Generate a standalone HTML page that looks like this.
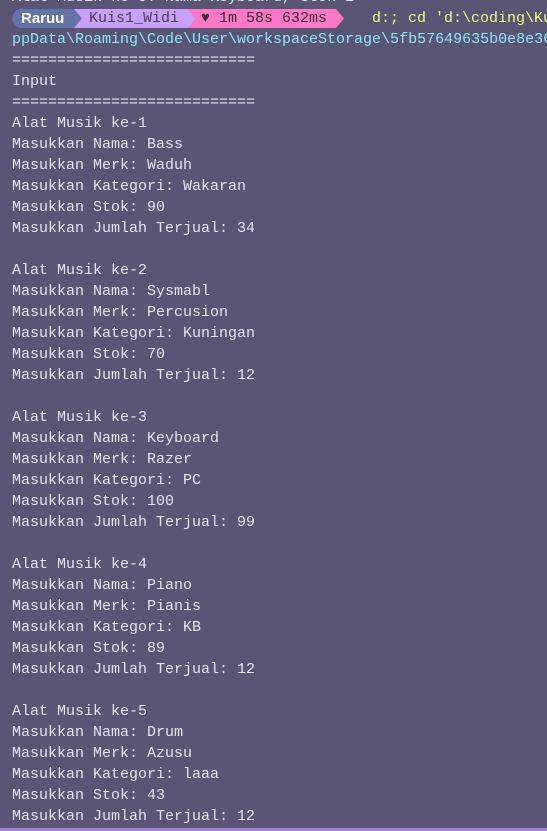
<!DOCTYPE html>
<html><head><meta charset="utf-8"><style>
html,body{margin:0;padding:0;}
body{width:547px;height:831px;background:#5a5475;overflow:hidden;position:relative;font-family:"Liberation Mono","DejaVu Sans Mono",monospace;font-size:15px;color:#e6e3ef;}
.l{position:absolute;left:12px;white-space:pre;line-height:21px;height:21px;}
.bar{position:absolute;left:0;right:0;bottom:0;height:3px;background:#a77fd9;}
.seg{position:absolute;top:9px;height:19px;line-height:19px;white-space:pre;}
</style></head><body>
<div class="l" style="top:-13px">Alat Musik ke-5: Nama=Keyboard, Stok=1</div>
<svg style="position:absolute;left:0;top:9px" width="360" height="19">
<path d="M22 0 H188 L196 9.5 L188 19 H22 A9.5 9.5 0 0 1 22 0Z" fill="#c9a0f7"/>
<path d="M22 0 H74 L82 9.5 L74 19 H22 A9.5 9.5 0 0 1 22 0Z" fill="#6373a3"/>
<path d="M188 0 H336 L344 9.5 L336 19 H188 L196 9.5Z" fill="#ff78c8"/>
</svg>
<div class="seg" style="left:21px;color:#fff;font-family:'Liberation Sans',sans-serif;font-weight:bold;font-size:15px">Raruu</div>
<div class="seg" style="left:89px;color:#4a3a5e">Kuis1_Widi</div>
<div class="seg" style="left:201px;color:#3a2a3a">♥ 1m 58s 632ms</div>
<div class="seg" style="left:372px;color:#f1fa8c">d:; cd 'd:\coding\Ku</div>
<div class="l" style="top:29px;color:#8be9fd">ppData\Roaming\Code\User\workspaceStorage\5fb57649635b0e8e36</div>
<div class="l" style="top:50px">===========================</div>
<div class="l" style="top:71px">Input</div>
<div class="l" style="top:92px">===========================</div>
<div class="l" style="top:113px">Alat Musik ke-1</div>
<div class="l" style="top:134px">Masukkan Nama: Bass</div>
<div class="l" style="top:155px">Masukkan Merk: Waduh</div>
<div class="l" style="top:176px">Masukkan Kategori: Wakaran</div>
<div class="l" style="top:197px">Masukkan Stok: 90</div>
<div class="l" style="top:218px">Masukkan Jumlah Terjual: 34</div>
<div class="l" style="top:260px">Alat Musik ke-2</div>
<div class="l" style="top:281px">Masukkan Nama: Sysmabl</div>
<div class="l" style="top:302px">Masukkan Merk: Percusion</div>
<div class="l" style="top:323px">Masukkan Kategori: Kuningan</div>
<div class="l" style="top:344px">Masukkan Stok: 70</div>
<div class="l" style="top:365px">Masukkan Jumlah Terjual: 12</div>
<div class="l" style="top:407px">Alat Musik ke-3</div>
<div class="l" style="top:428px">Masukkan Nama: Keyboard</div>
<div class="l" style="top:449px">Masukkan Merk: Razer</div>
<div class="l" style="top:470px">Masukkan Kategori: PC</div>
<div class="l" style="top:491px">Masukkan Stok: 100</div>
<div class="l" style="top:512px">Masukkan Jumlah Terjual: 99</div>
<div class="l" style="top:554px">Alat Musik ke-4</div>
<div class="l" style="top:575px">Masukkan Nama: Piano</div>
<div class="l" style="top:596px">Masukkan Merk: Pianis</div>
<div class="l" style="top:617px">Masukkan Kategori: KB</div>
<div class="l" style="top:638px">Masukkan Stok: 89</div>
<div class="l" style="top:659px">Masukkan Jumlah Terjual: 12</div>
<div class="l" style="top:701px">Alat Musik ke-5</div>
<div class="l" style="top:722px">Masukkan Nama: Drum</div>
<div class="l" style="top:743px">Masukkan Merk: Azusu</div>
<div class="l" style="top:764px">Masukkan Kategori: laaa</div>
<div class="l" style="top:785px">Masukkan Stok: 43</div>
<div class="l" style="top:806px">Masukkan Jumlah Terjual: 12</div>
<div class="bar"></div>
</body></html>
